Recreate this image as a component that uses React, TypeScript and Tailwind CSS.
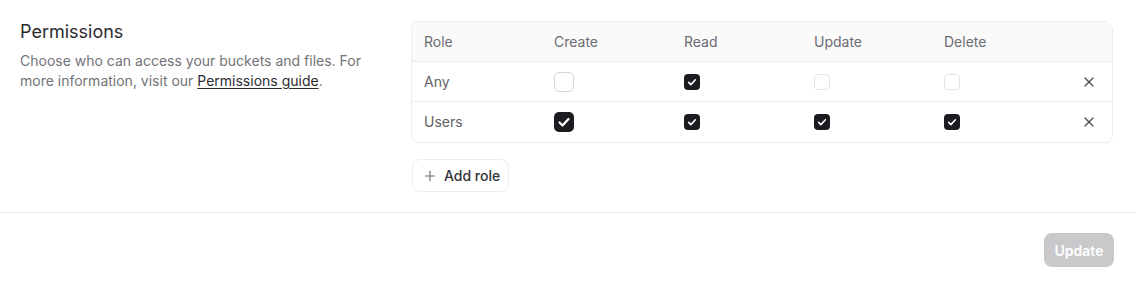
import { Plus, X } from "lucide-react"

type Perm = { create: boolean; read: boolean; update: boolean; del: boolean }

const roles: { name: string; perms: Perm }[] = [
  { name: "Any", perms: { create: false, read: true, update: false, del: false } },
  { name: "Users", perms: { create: true, read: true, update: true, del: true } },
]

function Check({ checked, big, faint }: { checked: boolean; big?: boolean; faint?: boolean }) {
  const size = big ? "w-5 h-5 rounded-[5px]" : "w-4 h-4 rounded-[4px]"
  if (!checked) {
    return (
      <span
        className={`${size} inline-block bg-white border ${faint ? "border-[#e3e3e3]" : "border-[#d6d6d6]"}`}
      />
    )
  }
  return (
    <span className={`${size} inline-flex items-center justify-center bg-[#1c1c20]`}>
      <svg viewBox="0 0 16 16" className={big ? "w-4 h-4" : "w-3 h-3"} fill="none">
        <path d="M3.5 8.5l3 3 6-6.5" stroke="white" strokeWidth={big ? 2.2 : 2} strokeLinecap="round" strokeLinejoin="round" />
      </svg>
    </span>
  )
}

export default function App() {
  return (
    <div className="w-[1136px] h-[290px] bg-white text-[14px] font-['Inter',sans-serif]">
      <div className="flex pl-5 pr-[23px] pt-[21px] pb-5 gap-5 border-b border-[#ececec]">
        {/* Left description */}
        <div className="w-[371px] shrink-0">
          <h2 className="text-[18px] leading-6 text-[#2c2c30] -mt-px">Permissions</h2>
          <p className="mt-[7px] leading-5 text-[#737378]">
            Choose who can access your buckets and files. For more information, visit our{" "}
            <a className="text-[#2c2c30] underline underline-offset-2 decoration-[#2c2c30]">Permissions guide</a>.
          </p>
        </div>

        {/* Table */}
        <div className="flex-1">
          <div className="border border-[#ececec] rounded-lg overflow-hidden">
            <div className="grid grid-cols-[130px_130px_130px_130px_130px_1fr] h-10 items-center px-3 pb-px bg-[#fafafb] border-b border-[#ececec] text-[#6c6c72]">
              <span>Role</span>
              <span>Create</span>
              <span>Read</span>
              <span>Update</span>
              <span>Delete</span>
              <span />
            </div>
            {roles.map((r, i) => (
              <div
                key={r.name}
                className={`grid grid-cols-[130px_130px_130px_130px_130px_1fr] h-10 items-center px-3 text-[#5f5f65] ${
                  i < roles.length - 1 ? "border-b border-[#ececec]" : ""
                }`}
              >
                <span className="-mt-px">{r.name}</span>
                <span className="flex items-center">
                  <Check checked={r.perms.create} big />
                </span>
                <span className="flex items-center">
                  <Check checked={r.perms.read} />
                </span>
                <span className="flex items-center">
                  <Check checked={r.perms.update} faint />
                </span>
                <span className="flex items-center">
                  <Check checked={r.perms.del} faint />
                </span>
                <span className="flex justify-end pr-[3px]">
                  <X className="w-4 h-4 text-[#4a4a4f]" strokeWidth={1.8} />
                </span>
              </div>
            ))}
          </div>

          <button className="mt-4 h-[33px] pl-[9px] pr-2 ml-px flex items-center gap-[6px] border border-[#ececec] rounded-lg text-[#333338] font-medium">
            <Plus className="w-4 h-4 text-[#6c6c72]" strokeWidth={1.6} />
            Add role
          </button>
        </div>
      </div>

      <div className="flex justify-end pr-[22px] pt-5">
        <button className="h-[34px] w-[70px] rounded-lg bg-[#c9c9cb] text-white font-semibold">Update</button>
      </div>
    </div>
  )
}
